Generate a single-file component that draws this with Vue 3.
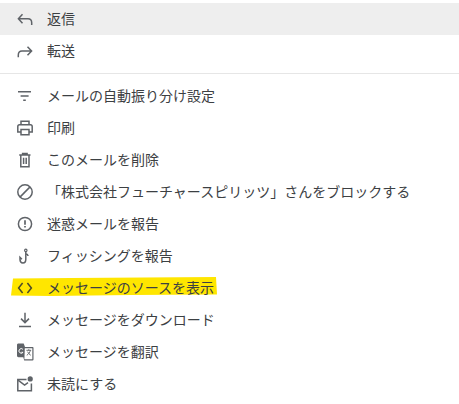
<script setup>
const top = [
  { id: 'reply', label: '返信', hover: true },
  { id: 'forward', label: '転送' },
];
const rest = [
  { id: 'filter', label: 'メールの自動振り分け設定' },
  { id: 'print', label: '印刷' },
  { id: 'trash', label: 'このメールを削除' },
  { id: 'block', label: '「株式会社フューチャースピリッツ」さんをブロックする' },
  { id: 'spam', label: '迷惑メールを報告' },
  { id: 'hook', label: 'フィッシングを報告' },
  { id: 'code', label: 'メッセージのソースを表示', mark: true },
  { id: 'download', label: 'メッセージをダウンロード' },
  { id: 'translate', label: 'メッセージを翻訳' },
  { id: 'unread', label: '未読にする' },
];
</script>

<template>
  <div class="menu">
    <div v-for="r in top" :key="r.id" class="row" :class="{ hover: r.hover }">
      <svg class="icon" viewBox="0 0 18 18" fill="none" stroke="#5f6368" stroke-width="1.5">
        <path v-if="r.id === 'reply'" d="M6.5 4.3 2.4 8.8l4.1 4.4M2.6 8.8H12c2.4 0 3.7 1.6 3.7 4v2.2" />
        <path v-else d="M11.5 4.7l4.1 4.3-4.1 4.2M15.4 9H6c-2.4 0-3.7 1.6-3.7 4v2.2" />
      </svg>
      <span class="label">{{ r.label }}</span>
    </div>
    <div class="divider"></div>
    <div v-for="r in rest" :key="r.id" class="row">
      <svg v-if="r.mark" class="mark" viewBox="0 0 206 19" preserveAspectRatio="none">
        <path d="M2 1.5 L60 1 L205 0 L206 17.5 L120 18 L40 19 L0 18.5 Z" fill="#ffe600" />
      </svg>
      <svg class="icon" viewBox="0 0 18 18" fill="none" stroke="#5f6368" stroke-width="1.5">
        <template v-if="r.id === 'filter'">
          <path d="M2 4.7h13M4.6 9h8M7.2 13.2h2.6" />
        </template>
        <template v-else-if="r.id === 'print'">
          <path d="M5 5.8V2.2h8v3.6M5 13H1.8V7.6c0-1 .7-1.8 1.7-1.8h11c1 0 1.7.8 1.7 1.8V13H13" />
          <path d="M5 10.6h8v5.2H5z" />
        </template>
        <template v-else-if="r.id === 'trash'">
          <path d="M3.2 4h11.3M6.6 4V2.4h4.5V4M4.8 4v11.8h8.2V4M7.6 6.8v6.2M10.2 6.8v6.2" />
        </template>
        <template v-else-if="r.id === 'block'">
          <circle cx="9" cy="9" r="7.2" />
          <path d="M3.9 14.1 14.1 3.9" />
        </template>
        <template v-else-if="r.id === 'spam'">
          <circle cx="9" cy="9" r="6.6" />
          <path d="M9 5.2v4.6M9 11v1.6" stroke-width="1.7" />
        </template>
        <template v-else-if="r.id === 'hook'">
          <circle cx="9.8" cy="3.4" r="1.2" stroke-width="1.2" />
          <path d="M9.8 4.6v7.6c0 2.2-1.2 3.8-2.9 3.8s-2.9-1.4-2.9-3.4V10.3l1.9 1.9M9.8 6.8c1.4.2 2.1.9 2.3 2.2" />
        </template>
        <template v-else-if="r.id === 'code'">
          <path d="M6.6 4 2.6 9l4 5M11.4 4l4 5-4 5" stroke="#4b4a2a" />
        </template>
        <template v-else-if="r.id === 'download'">
          <path d="M9 1.8v9.6M5 7.6l4 4 4-4M3 15.4h12" />
        </template>
        <template v-else-if="r.id === 'translate'">
          <path d="M1 2c0-1 .6-1.5 1.5-1.5h5.2L9 4h7.5c.6 0 1 .4 1 1v11.6c0 .6-.4.9-1 .9H8.2l-.9-3.3H2.5C1.6 14.2 1 13.6 1 12.6z" fill="#5f6368" stroke="none" />
          <path d="M8.8 5.2h7.5v11.1H9.4l-1-.1z" fill="#fff" stroke="none" />
          <path d="M6.9 6.3A2.3 2.3 0 1 0 7.1 9.3H5.3" stroke="#fff" stroke-width="1" />
          <path d="M10.4 7.3h4.8M12.8 6.2v1.1M14.4 7.3c-.5 2.2-2 3.9-3.6 5M11.6 8.7c.6 1.5 1.7 2.7 3.2 3.6" stroke-width=".9" />
        </template>
        <template v-else-if="r.id === 'unread'">
          <path d="M10.5 4.5H1.8v11.3h13.6V8.5" />
          <path d="M2 5.2 8.6 10l3.4-2.4" />
          <circle cx="14.2" cy="3.9" r="2.6" fill="#5f6368" stroke="none" />
        </template>
      </svg>
      <span class="label">{{ r.label }}</span>
    </div>
  </div>
</template>

<style scoped>
.menu {
  width: 459px;
  height: 404px;
  padding-top: 3px;
  box-sizing: border-box;
  background: #fff;
  font-family: "Noto Sans CJK JP", "Noto Sans", sans-serif;
  font-size: 14px;
  color: #3c4043;
  overflow: hidden;
}
.row {
  position: relative;
  display: flex;
  align-items: center;
  height: 32px;
  padding-left: 16px;
}
.hover {
  background: #eeeeee;
}
.icon {
  position: relative;
  width: 18px;
  height: 18px;
  flex: none;
  margin-right: 13px;
}
.label {
  position: relative;
  white-space: nowrap;
  line-height: 20px;
  padding-bottom: 2px;
}
.divider {
  height: 1px;
  margin: 6px 0;
  background: #e6e6e6;
}
.mark {
  position: absolute;
  left: 11px;
  top: 5px;
  width: 206px;
  height: 19px;
}
</style>
